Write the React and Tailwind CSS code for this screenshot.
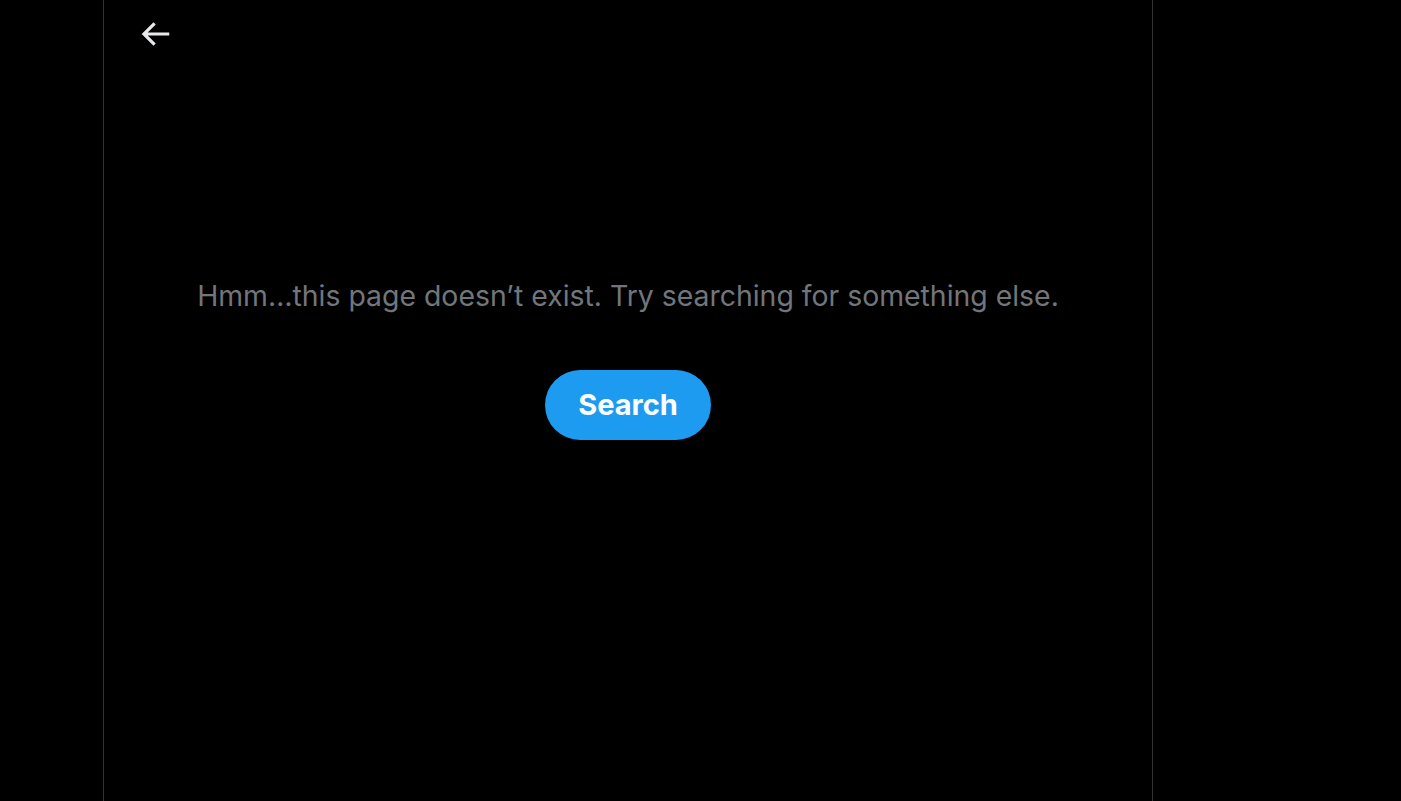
import React from 'react';

function BackArrow() {
  return (
    <svg viewBox="0 0 24 24" className="w-[38px] h-[38px] fill-[#e7e9ea]">
      <path d="M7.414 13l5.043 5.04-1.414 1.42L3.586 12l7.457-7.46 1.414 1.42L7.414 11H21v2H7.414z" />
    </svg>
  );
}

export default function App() {
  return (
    <div className="min-h-screen bg-black flex" style={{ fontFamily: 'Inter, "Noto Sans", sans-serif' }}>
      <div className="ml-[103px] w-[1050px] h-[801px] border-x border-[#2f3336] flex flex-col">
        <div className="h-[68px] pl-[32px] pt-[15px]">
          <button className="block">
            <BackArrow />
          </button>
        </div>
        <div className="flex flex-col items-center mt-[208px]">
          <p className="text-[28.4px] leading-[40px] text-[#71767b]">
            Hmm…this page doesn’t exist. Try searching for something else.
          </p>
          <button className="mt-[54px] h-[70px] px-[33px] rounded-full bg-[#1d9bf0] text-white text-[29px] font-bold">
            Search
          </button>
        </div>
      </div>
    </div>
  );
}
